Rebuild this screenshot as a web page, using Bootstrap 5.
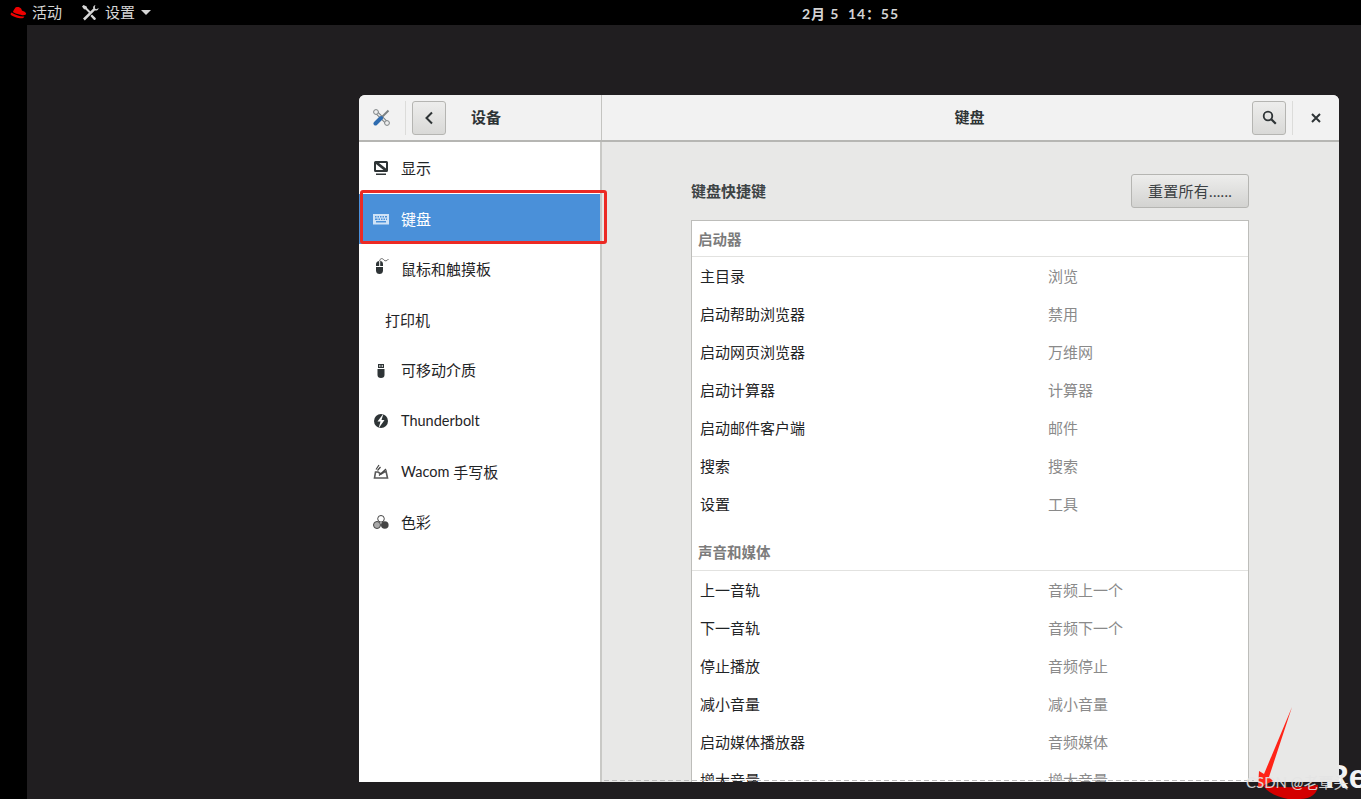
<!DOCTYPE html>
<html lang="zh-CN">
<head>
    <meta charset="UTF-8">
    <title>键盘</title>
    <link href="https://cdn.jsdelivr.net/npm/bootstrap@5.3.0/dist/css/bootstrap.min.css" rel="stylesheet">
    <style>
        html, body { height: 100%; }
        body { background: #000; overflow: hidden; font-family: "Lato", "Noto Sans CJK SC", sans-serif; font-size: 15px; color: #2e3436; }
        .top-bar { height: 25px; color: #d6d6d6; font-size: 15px; }
        .top-left { padding-left: 10px; width: 400px; }
        .hat-label { margin-left: 5px; }
        .tools-top { margin-left: 19px; }
        .top-clock { font-size: 14px; font-weight: 700; letter-spacing: .9px; left: 0; right: 0; top: 3px; color: #d4d4d4; text-align: center; padding-left: 340px; white-space: pre; }
        .caret-down { width: 0; height: 0; border-left: 5px solid transparent; border-right: 5px solid transparent; border-top: 5px solid #d6d6d6; margin-left: 6px; }
        .desk { position: absolute; left: 27px; right: 0; top: 25px; bottom: 0; background: #201e20; }
        .settings-win { position: absolute; left: 359px; top: 95px; width: 980px; height: 687px; background: #e8e8e7; border-radius: 6px 6px 0 0; overflow: hidden; }
        .head-bar { height: 47px; background: #f2f2f2; border-bottom: 2px solid #b6b6b3; flex-shrink: 0; }
        .head-left { width: 243px; border-right: 1px solid #c4c4c1; padding-left: 14px; }
        .head-sep { width: 1px; height: 34px; background: #dcdcda; }
        .sep-left { margin-left: 15px; }
        .back-btn { margin-left: 6px; }
        .tool-btn { width: 34px; height: 34px; border: 1px solid #b5b5b2; border-radius: 3px; background: linear-gradient(#ededec, #d9d9d7); padding: 0; }
        .head-title { font-weight: 700; color: #2e3436; }
        .title-left { margin-left: 25px; }
        .title-mid { padding-left: 85px; }
        .sep-right { margin-left: 6px; }
        .close-box { width: 46px; }
        .side-pane { width: 243px; background: #fff; border-right: 2px solid #c9c9c6; padding-top: 1px; }
        .side-item { height: 50.6px; padding-left: 14px; color: #1f2426; }
        .side-item svg { width: 16px; height: 16px; margin-right: 12px; flex-shrink: 0; }
        .ico-up { transform: translateY(-3px); }
        .lat-text { font-size: 14.5px; }
        .side-on { background: #4a90d9; color: #fff; }
        .side-print { padding-left: 26px; }
        .main-pane { padding: 32px 0 0 89px; min-width: 0; }
        .main-col { width: 558px; }
        .sec-title { height: 34px; margin-bottom: 12px; color: #3d4345; }
        .reset-btn { width: 118px; height: 34px; border: 1px solid #b5b5b2; border-radius: 3px; background: linear-gradient(#ededec, #d3d3d1); color: #3c4144; font-size: 15px; letter-spacing: .3px; padding: 0; }
        .keys-box { background: #fff; border: 1px solid #bdbdba; border-bottom: 0; }
        .group-head { height: 36px; padding: 2px 0 0 6px; font-weight: 700; color: #7c7c7c; border-bottom: 1px solid #e2e2e0; font-size: 14.5px; }
        .group-next { margin-top: 12px; padding-top: 1px; }
        .key-row { height: 38px; padding-left: 8px; color: #1f2426; }
        .key-name { width: 348px; }
        .key-val { color: #8a8a8a; }
        .dash-line { position: absolute; left: 604px; top: 780px; width: 650px; height: 1px; background: repeating-linear-gradient(90deg, #bdbdbd 0 5px, transparent 5px 8px); }
        .red-box { position: absolute; left: 360px; top: 190px; width: 247px; height: 54px; border: 3px solid #ec2a24; border-radius: 3px; }
        .brand-re { position: absolute; left: 1325px; top: 757px; color: #f4f4f4; font-family: "Liberation Sans", sans-serif; font-weight: 700; font-size: 33px; line-height: 40px; }
        .mark-svg { position: absolute; left: 1240px; top: 700px; }
        .wm-text { position: absolute; left: 1246px; top: 773px; color: #e4e4e4; font-size: 15px; line-height: 18px; opacity: .9; }
    </style>
</head>
<body>
    <div class="desk"></div>
    <div class="brand-re">Re</div>

    <div class="top-bar d-flex align-items-center position-relative">
        <div class="top-left d-flex align-items-center">
            <svg width="17" height="13" viewBox="0 0 17 13"><path fill="#e00" d="M5 2.200C6 .8 8 1 9.600 1.400c1.200.3 2 1.500 2.300 3 .9.500 4 1.300 4.200 3.200.1 1.300-1.800 2-4 1.600C8.800 8.700 3.400 6.900 2.900 6.100c.3-1 1.200-2.500 2.100-3.900z"/><path fill="#e00" d="M1.500 6.500c-1 .8-1.300 2-.2 2.800 1.900 1.300 6.600 3 10 3 1.800 0 2.900-.7 3-1.800-3.300.6-9.300-1.600-12.800-4z"/></svg>
            <span class="hat-label">活动</span>
            <svg class="tools-top" width="20" height="18" viewBox="0 0 20 18"><path fill="#d6d6d6" d="M14.500 1c-1.800.3-2.800 2-2.200 3.600L2 14.500l1.800 2 10-10c1.800.500 3.600-.6 3.900-2.500l-2.300 1.300-1.500-.9V2.300z"/><path fill="#d6d6d6" d="M2.500 1 1 2.500 3 5.200l1.600.2 3.700 3.800 1.400-1.400L6 4l-.3-1.400zM11 10.500l-1.600 1.600 3.400 3.600c1 1 2.800-.7 1.800-1.700z"/></svg>
            <span class="ms-1">设置</span>
            <span class="caret-down"></span>
        </div>
        <div class="top-clock position-absolute">2月 5  14：55</div>
    </div>

    <div class="settings-win d-flex flex-column">
        <div class="head-bar d-flex">
            <div class="head-left d-flex align-items-center">
                <svg width="17" height="17" viewBox="0 0 17 17">
                    <path stroke="#7d8284" stroke-width="3.400" d="m3 3 11 11"/>
                    <path stroke="#e6e6e6" stroke-width="1.400" d="m3.500 3.500 10 10"/>
                    <circle cx="3" cy="3" r="2.400" fill="#eee" stroke="#7d8284"/>
                    <circle cx="14" cy="14" r="2.400" fill="#eee" stroke="#7d8284"/>
                    <path stroke="#7d8284" stroke-width="2" d="m8 9 7.500-7.500"/>
                    <path stroke="#2f6cb0" stroke-width="4" stroke-linecap="round" d="m2.500 14.500 5.500-5.500"/>
                </svg>
                <span class="head-sep sep-left"></span>
                <button class="tool-btn back-btn d-flex align-items-center justify-content-center" type="button"><svg width="10" height="14" viewBox="0 0 10 14"><path fill="none" stroke="#2e3436" stroke-width="2" d="M8 1.500 2.500 7 8 12.500"/></svg></button>
                <span class="head-title title-left">设备</span>
            </div>
            <div class="flex-grow-1 d-flex align-items-center">
                <span class="head-title title-mid flex-grow-1 text-center">键盘</span>
                <button class="tool-btn d-flex align-items-center justify-content-center" type="button"><svg width="15" height="15" viewBox="0 0 15 15"><circle cx="6" cy="6" r="4.300" fill="none" stroke="#2e3436" stroke-width="1.800"/><path stroke="#2e3436" stroke-width="2.200" d="m9.300 9.300 4.500 4.500"/></svg></button>
                <span class="head-sep sep-right"></span>
                <span class="close-box d-flex justify-content-center"><svg width="10" height="10" viewBox="0 0 10 10"><path stroke="#2e3436" stroke-width="2" d="m1 1 8 8M9 1 1 9"/></svg></span>
            </div>
        </div>

        <div class="d-flex flex-grow-1" style="min-height:0">
            <div class="side-pane">
                <div class="side-item d-flex align-items-center"><svg viewBox="0 0 16 16"><path fill="#2e3436" fill-rule="evenodd" d="M2.500 1h11A1.500 1.500 0 0 1 15 2.500v8a1.500 1.500 0 0 1-1.500 1.500h-11A1.500 1.500 0 0 1 1 10.500v-8A1.500 1.500 0 0 1 2.500 1zM6 3l7 5.500V3zM3 4v6h7.500z"/><path fill="#2e3436" d="M3 13.500h10V15H3z"/></svg>显示</div>
                <div class="side-item side-on d-flex align-items-center"><svg viewBox="0 0 16 16"><path fill="#cfe2f6" fill-rule="evenodd" d="M0 3h16v10.500H0zM2 5v1.500h1.500V5zm2.500 0v1.500H6V5zM7 5v1.500h1.500V5zm2.500 0v1.500H11V5zm2.500 0v1.500h2V5zM2 7.500V9h2.500V7.500zm3.500 0V9H7V7.500zm2.500 0V9h1.500V7.500zm2.500 0V9H12V7.500zm2.500 0V9h1V7.500zM3 10v1.500h10V10z"/></svg>键盘</div>
                <div class="side-item d-flex align-items-center"><svg class="ico-up" viewBox="0 0 16 16"><path fill="#2e3436" d="M3 8V6c0-2 2-3 3.200-3v5zM7.200 3C8.800 3 10 4 10 6v2H7.200zM3 9h7v3.500c0 2.500-1.500 3.500-3.500 3.500S3 15 3 12.500z"/><path fill="none" stroke="#666" d="M6.700 3C7 0 9.500 0 11 2c1 1.500 3 1 4.500-1"/></svg>鼠标和触摸板</div>
                <div class="side-item side-print d-flex align-items-center">打印机</div>
                <div class="side-item d-flex align-items-center"><svg viewBox="0 0 16 16"><path fill="#2e3436" d="M4.500 6h7v6c0 1.800-1.200 3-3.500 3s-3.500-1.200-3.500-3zM5 1h6v4H5z"/><path fill="#fff" d="M6.200 2.200h1.200v1.500H6.200zM8.700 2.200h1.200v1.500H8.700z"/></svg>可移动介质</div>
                <div class="side-item d-flex align-items-center"><svg viewBox="0 0 16 16"><circle cx="8" cy="8" r="7" fill="#2e3436"/><path fill="#fff" d="M10.500 .5 4.500 8.500h3L5.500 15.500l6-8.500h-3z"/></svg><span class="lat-text">Thunderbolt</span></div>
                <div class="side-item d-flex align-items-center"><svg viewBox="0 0 16 16"><path fill="none" stroke="#5a5a5a" stroke-width="1.600" d="M1.500 14h13L13 7l-5 3-3-2H2.500z"/><path fill="none" stroke="#444" stroke-width="1.200" d="M3 5.500 6 1M4.500 6.500l3-3.500M6 11.500 13 5"/></svg><span class="lat-text">Wacom</span>&nbsp;手写板</div>
                <div class="side-item d-flex align-items-center"><svg viewBox="0 0 16 16"><circle cx="8" cy="4.800" r="3.300" fill="#fff" stroke="#444"/><circle cx="4" cy="11" r="3.500" fill="#aaa" stroke="#444"/><circle cx="11.800" cy="11" r="3.800" fill="#444"/></svg>色彩</div>
            </div>

            <div class="main-pane flex-grow-1">
                <div class="main-col">
                    <div class="sec-title head-title d-flex justify-content-between align-items-center">
                        <span>键盘快捷键</span>
                        <button class="reset-btn" type="button">重置所有......</button>
                    </div>
                    <div class="keys-box" id="keys"></div>
                </div>
            </div>
        </div>
    </div>

    <div class="dash-line"></div>
    <div class="red-box"></div>
    <svg class="mark-svg" width="100" height="99" viewBox="0 0 100 99">
        <path fill="#d40000" d="M23 85c15 3 38 3 55 0 0 8-7 14-18 14H48C36 97 27 92 23 85z"/>
        <path fill="#ff2418" d="M52 7 29 77l4 4-15 7 1-17 5 3z"/>
    </svg>
    <div class="wm-text">CSDN @老覃头</div>

    <script>
        const groups = [
            ['启动器', [
                ['主目录', '浏览'], ['启动帮助浏览器', '禁用'], ['启动网页浏览器', '万维网'],
                ['启动计算器', '计算器'], ['启动邮件客户端', '邮件'], ['搜索', '搜索'], ['设置', '工具']
            ]],
            ['声音和媒体', [
                ['上一音轨', '音频上一个'], ['下一音轨', '音频下一个'], ['停止播放', '音频停止'],
                ['减小音量', '减小音量'], ['启动媒体播放器', '音频媒体'], ['增大音量', '增大音量']
            ]]
        ];

        // build the shortcut list
        const box = document.getElementById('keys');
        groups.forEach((g, i) => {
            let html = `<div class="group-head d-flex align-items-center ${i ? 'group-next' : ''}">${g[0]}</div>`;
            g[1].forEach(r => {
                html += `<div class="key-row d-flex align-items-center"><span class="key-name">${r[0]}</span><span class="key-val">${r[1]}</span></div>`;
            });
            box.insertAdjacentHTML('beforeend', html);
        });
    </script>
    <script src="https://cdn.jsdelivr.net/npm/bootstrap@5.3.0/dist/js/bootstrap.bundle.min.js"></script>
</body>
</html>
